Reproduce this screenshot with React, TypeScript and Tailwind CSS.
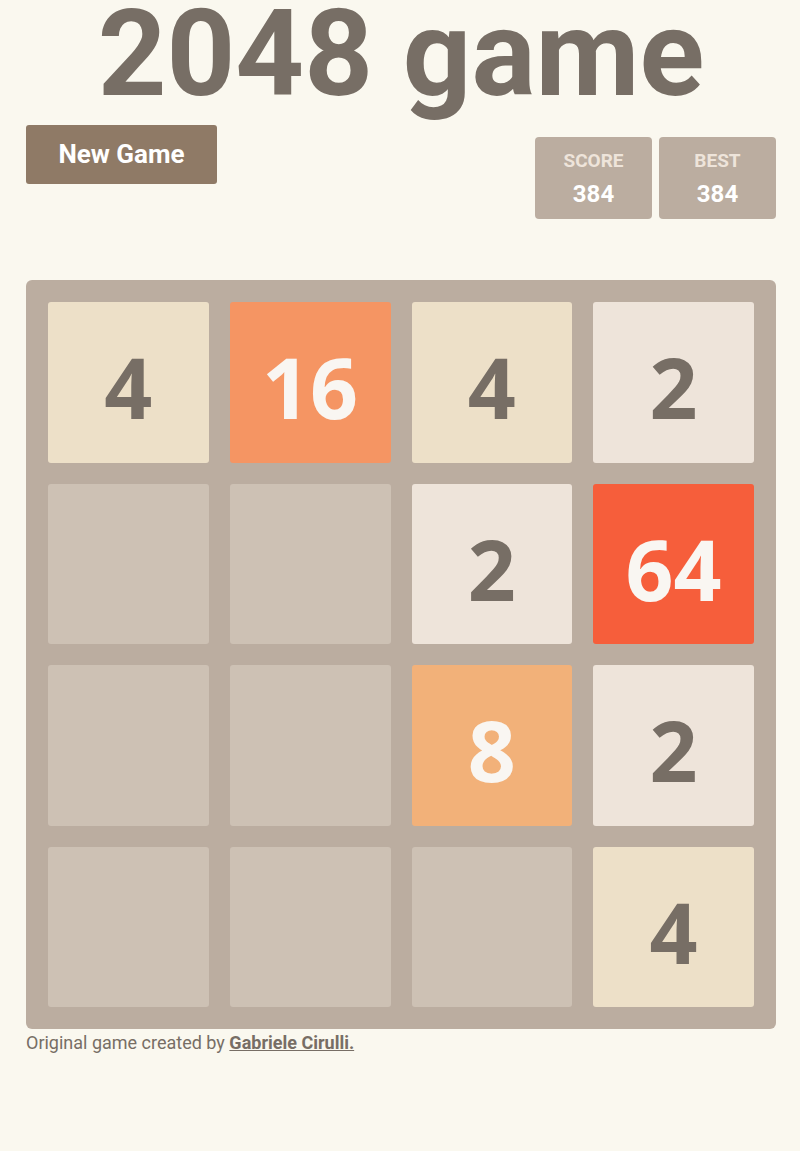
import React from 'react';

const board: number[][] = [
  [4, 16, 4, 2],
  [0, 0, 2, 64],
  [0, 0, 8, 2],
  [0, 0, 0, 4],
];

function tileClass(v: number) {
  switch (v) {
    case 2:
      return 'bg-[#eee4da] text-[#776e65]';
    case 4:
      return 'bg-[#ede0c8] text-[#776e65]';
    case 8:
      return 'bg-[#f2b179] text-[#f9f6f2]';
    case 16:
      return 'bg-[#f59563] text-[#f9f6f2]';
    case 32:
      return 'bg-[#f67c5f] text-[#f9f6f2]';
    case 64:
      return 'bg-[#f65e3b] text-[#f9f6f2]';
    default:
      return 'bg-[#cdc1b4]';
  }
}

function ScoreBox({ label, value }: { label: string; value: number }) {
  return (
    <div className="w-[117px] h-[82px] rounded-[4px] bg-[#bbada0] flex flex-col items-center pt-[12px]">
      <span className="text-[19px] font-bold leading-[24px] text-[#eee4da]">{label}</span>
      <span className="mt-[5px] text-[24px] font-bold leading-[32px] text-white">{value}</span>
    </div>
  );
}

export default function App() {
  return (
    <div className="min-h-screen bg-[#faf8ef] font-['Roboto',sans-serif] text-[#776e65]">
      <div className="w-[750px] ml-[26px] pt-px">
        <h1 className="text-center text-[120px] font-bold leading-[108px] -mt-px">2048 game</h1>

        <div className="flex justify-between items-start mt-[17px]">
          <button className="w-[191px] h-[59px] rounded-[3px] bg-[#8f7a66] text-white text-[26px] font-bold">
            New Game
          </button>
          <div className="flex gap-[7px] mt-[12px]">
            <ScoreBox label="SCORE" value={384} />
            <ScoreBox label="BEST" value={384} />
          </div>
        </div>

        {/* Board */}
        <div className="mt-[61px] h-[749px] rounded-[6px] bg-[#bbada0] p-[22px] grid grid-cols-4 grid-rows-4 gap-[21px]">
          {board.flat().map((v, i) => (
            <div
              key={i}
              className={`rounded-[3px] flex items-center justify-center pt-[10px] font-['Open_Sans',sans-serif] text-[84px] leading-none font-bold ${tileClass(v)}`}
            >
              {v > 0 ? v : ''}
            </div>
          ))}
        </div>

        <p className="mt-[1px] text-[18px] leading-[26px]">
          Original game created by{' '}
          <a className="font-bold underline">Gabriele Cirulli.</a>
        </p>
      </div>
    </div>
  );
}
